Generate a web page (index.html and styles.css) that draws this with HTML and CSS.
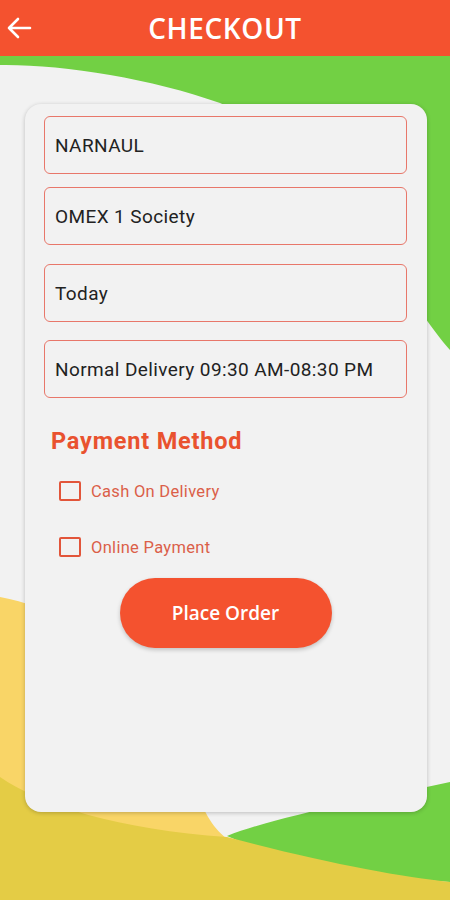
FILE: index.html
```html
<!DOCTYPE html>
<html lang="en">
  <head>
    <meta charset="UTF-8" />
    <meta name="viewport" content="width=device-width, initial-scale=1.0" />
    <title>Checkout</title>
    <link rel="stylesheet" href="styles.css">
  </head>
  <body>
    <svg class="backdrop" width="450" height="900" viewBox="0 0 450 900">
      <path fill="#72d044" d="M0,56 L450,56 L450,350 C405,300 330,150 220,103 C150,78 60,64 0,65 Z" />
      <path fill="#f9d567" d="M0,597 C120,620 170,720 200,800 C210,825 220,835 240,848 L0,900 Z" />
      <path fill="#72d044" d="M450,782 C370,800 280,815 227,836 C300,868 390,878 450,882 Z" />
      <path fill="#e4cc45" d="M0,777 C40,805 120,830 227,837 C320,862 400,877 450,882 L450,900 L0,900 Z" />
    </svg>

    <header class="topbar">
      <button class="back" aria-label="Back">
        <svg width="26" height="22" viewBox="0 0 26 22">
          <path d="M24 11H3M12 2L3 11l9 9" fill="none" stroke="#fff" stroke-width="2.6" stroke-linecap="round" stroke-linejoin="round" />
        </svg>
      </button>
      <h1>CHECKOUT</h1>
    </header>

    <main class="card">
      <div class="field">NARNAUL</div>
      <div class="field">OMEX 1 Society</div>
      <div class="field">Today</div>
      <div class="field">Normal Delivery 09:30 AM-08:30 PM</div>

      <h2>Payment Method</h2>
      <label class="option"><input type="checkbox" /><span>Cash On Delivery</span></label>
      <label class="option"><input type="checkbox" /><span>Online Payment</span></label>

      <button class="order">Place Order</button>
    </main>
  </body>
</html>
```

FILE: styles.css
```css
body {
  margin: 0;
  width: 450px;
  height: 900px;
  overflow: hidden;
  position: relative;
  background: #f2f2f2;
  font-family: Roboto, "Noto Sans", sans-serif;
}
.backdrop {
  position: absolute;
  top: 0;
  left: 0;
  z-index: 0;
}
.topbar {
  position: relative;
  z-index: 1;
  height: 56px;
  background: #f4522f;
  display: flex;
  align-items: center;
  justify-content: center;
}
.back {
  position: absolute;
  left: 6px;
  top: 17px;
  background: none;
  border: none;
  padding: 0;
  display: flex;
}
.topbar h1 {
  margin: 0;
  color: #fff;
  font-family: "Open Sans", sans-serif;
  font-weight: 600;
  font-size: 28px;
  letter-spacing: 0.6px;
}
.card {
  position: relative;
  z-index: 1;
  box-sizing: border-box;
  margin: 48px 0 0 25px;
  width: 402px;
  height: 708px;
  background: #f2f2f2;
  border-radius: 16px;
  box-shadow: 0 1px 4px rgba(0, 0, 0, 0.22);
  padding: 12px 20px 0 19px;
  display: flex;
  flex-direction: column;
}
.field {
  box-sizing: border-box;
  flex: none;
  height: 58px;
  border: 1.5px solid #e8776a;
  border-radius: 6px;
  padding: 0 10px;
  display: flex;
  align-items: center;
  font-size: 19px;
  letter-spacing: 0.4px;
  color: #222;
  margin-bottom: 18px;
}
.field:first-child {
  margin-bottom: 13px;
}
.field:nth-child(2) {
  margin-bottom: 19px;
}
.card h2 {
  margin: 11px 0 26px 7px;
  color: #e9522f;
  font-size: 23.5px;
  letter-spacing: 0.8px;
  font-weight: 700;
}
.option {
  display: flex;
  align-items: center;
  margin-left: 15px;
  height: 20px;
  margin-bottom: 36px;
  color: #db5f49;
  font-size: 16.5px;
  letter-spacing: 0.3px;
}
.option input {
  appearance: none;
  margin: 0 10px 0 0;
  width: 22px;
  height: 20px;
  border: 2px solid #e2553a;
  border-radius: 2px;
}
.order {
  align-self: center;
  margin-top: -15px;
  width: 212px;
  height: 70px;
  border: none;
  border-radius: 35px;
  background: #f4522f;
  color: #fff;
  font-family: "Open Sans", sans-serif;
  font-weight: 600;
  font-size: 19px;
  box-shadow: 0 2px 4px rgba(0, 0, 0, 0.2);
}
```
